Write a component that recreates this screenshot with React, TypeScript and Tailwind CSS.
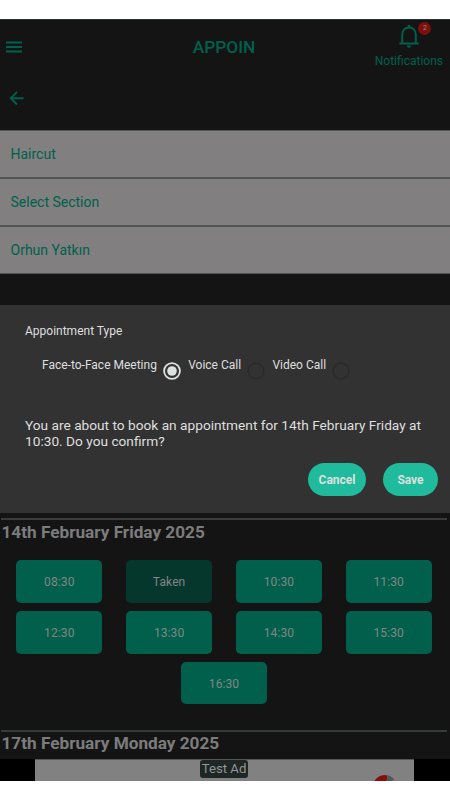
import React from "react";

function Field({ label }: { label: string }) {
  return (
    <div className="flex h-12 items-center border-b-2 border-[#505553] bg-[#817f80] pt-[1px] pl-[10.5px] text-[14px] text-[#00614c] last:h-[47px] last:border-b">
      {label}
    </div>
  );
}

function Slot({ label, taken = false }: { label: string; taken?: boolean }) {
  return (
    <button
      className={`h-[43px] w-[86px] rounded-[5px] pt-px text-[12px] tracking-[0.1px] text-[#858585] last:h-[42px] ${taken ? "bg-[#06372d]" : "bg-[#00604c]"}`}
    >
      {label}
    </button>
  );
}

function Radio({ label, checked = false }: { label: string; checked?: boolean }) {
  return (
    <label className="flex">
      <span className="whitespace-nowrap">{label}</span>
      <svg className="ml-[5.3px] mt-[5px] size-5" viewBox="0 0 20 20" fill="none">
        <circle cx="10" cy="10" r="7.9" stroke={checked ? "#dde1df" : "#292929"} strokeWidth={checked ? 1.8 : 1.2} />
        {checked && <circle cx="10" cy="10" r="4.8" fill="#dde1df" />}
      </svg>
    </label>
  );
}

export default function App() {
  return (
    <div className="h-[800px] w-[450px] overflow-hidden bg-white pt-[19px] font-['Roboto','Liberation_Sans',sans-serif]">
      <main className="h-[762px] overflow-hidden bg-[#141414]">
        <header className="h-[111px] border-t border-[#27332f] text-[#00604c]">
          <div className="grid h-[54px] grid-cols-[1fr_auto_1fr]">
            <svg className="ml-[6px] mt-[21px] h-3 w-4" viewBox="0 0 16 12" stroke="currentColor" strokeWidth="2">
              <path d="M0 1.5h16M0 6h16M0 10.4h16" />
            </svg>
            <h1 className="mt-[15px] mr-[2px] text-[17.3px] leading-6 font-medium">APPOIN</h1>
            <div className="mr-[7px] flex flex-col items-center justify-self-end">
              <div className="relative mt-[4px] h-6 w-6">
                <svg className="h-6 w-6" viewBox="0 0 24 24" fill="none" stroke="currentColor" strokeWidth="2">
                  <path d="M2.3 19.6h19.4M5.2 19V10.5C5.2 6.2 8 3.4 12 3.4s6.8 2.8 6.8 7.1V19" />
                  <path d="M12 1v2.3" strokeWidth="2.6" />
                  <path d="M9.8 21.6h4.4c-.3 1.5-1.1 2.2-2.2 2.2s-1.9-.7-2.2-2.2Z" fill="currentColor" stroke="none" />
                </svg>
                <span className="absolute -top-[2px] left-[21.5px] flex size-[13px] items-center justify-center rounded-full bg-[#7d100e] text-[7px] text-[#9a8181]">2</span>
              </div>
              <span className="mt-[4px] text-[12px] leading-[18px]">Notifications</span>
            </div>
          </div>
          <svg className="ml-[9px] mt-[16px] h-4 w-4" viewBox="0 0 16 16" fill="none" stroke="currentColor" strokeWidth="1.9">
            <path d="M14.6 8.2H2M8 1.9 1.8 8.2 8 14.5" />
          </svg>
        </header>

        <section className="border-t border-[#505553]">
          <Field label="Haircut" />
          <Field label="Select Section" />
          <Field label="Orhun Yatkın" />
        </section>

        <section className="mt-[31px] h-[208px] bg-[#323232] px-[25px] pt-[17px] text-[#dfdfdf]">
          <h2 className="text-[12px] leading-[18px]">Appointment Type</h2>
          <div className="mt-[16px] ml-[17px] flex gap-[6px] text-[12px] leading-[18px]">
            <Radio label="Face-to-Face Meeting" checked />
            <Radio label="Voice Call" />
            <Radio label="Video Call" />
          </div>
          <p className="mt-[36px] w-[410px] text-[13.7px] leading-4">
            You are about to book an appointment for 14th February Friday at
            <br />
            10:30. Do you confirm?
          </p>
          <div className="-mr-[13px] mt-[14px] flex justify-end gap-[17px] text-[12px] font-bold">
            <button className="h-[33px] w-[58px] rounded-full bg-[#1fbb9c]">Cancel</button>
            <button className="h-[33px] w-[55px] rounded-full bg-[#1fbb9c]">Save</button>
          </div>
        </section>

        <section className="pt-[5px]">
          <div className="mx-[1px] mr-[3px] h-[2px] bg-[#3b3b3b]" />
          <h3 className="ml-[1.5px] mt-[2px] text-[17.2px] leading-5 font-bold text-[#7c7c7c]">14th February Friday 2025</h3>
          <div className="mt-[17.5px] flex flex-wrap justify-center gap-x-[23.8px] gap-y-[8.4px] pr-[2px]">
            <Slot label="08:30" />
            <Slot label="Taken" taken />
            <Slot label="10:30" />
            <Slot label="11:30" />
            <Slot label="12:30" />
            <Slot label="13:30" />
            <Slot label="14:30" />
            <Slot label="15:30" />
            <Slot label="16:30" />
          </div>
        </section>

        <section className="mt-[25.3px]">
          <div className="mx-[1px] mr-[3px] h-[2px] bg-[#343b38]" />
          <h3 className="ml-[1.5px] mt-[1.5px] text-[17.2px] leading-5 font-bold text-[#7c7c7c]">17th February Monday 2025</h3>
        </section>

        <footer className="mt-[6px] flex h-[22px] justify-center bg-black pr-[2px]">
          <div className="flex h-full w-[379px] justify-center border-t border-[#555] bg-[#818181]">
            <div className="flex flex-1 justify-center pl-[41px]">
              <span className="h-[18px] rounded-[3px] bg-[#1e2725] px-[2px] text-[13.2px] leading-[18px] whitespace-nowrap text-[#949494]">Test Ad</span>
            </div>
            <svg className="mr-[17px] mt-[14px] h-2 w-6" viewBox="0 0 24 8">
              <path d="M1 7.5Q5 1 11.500 1q2 0 3 1l-1 5.500Z" fill="#84100d" />
              <path d="M11.500 1q7 0 10 5l-3 1h-5l1-5Z" fill="#565656" />
            </svg>
          </div>
        </footer>
      </main>
    </div>
  );
}
